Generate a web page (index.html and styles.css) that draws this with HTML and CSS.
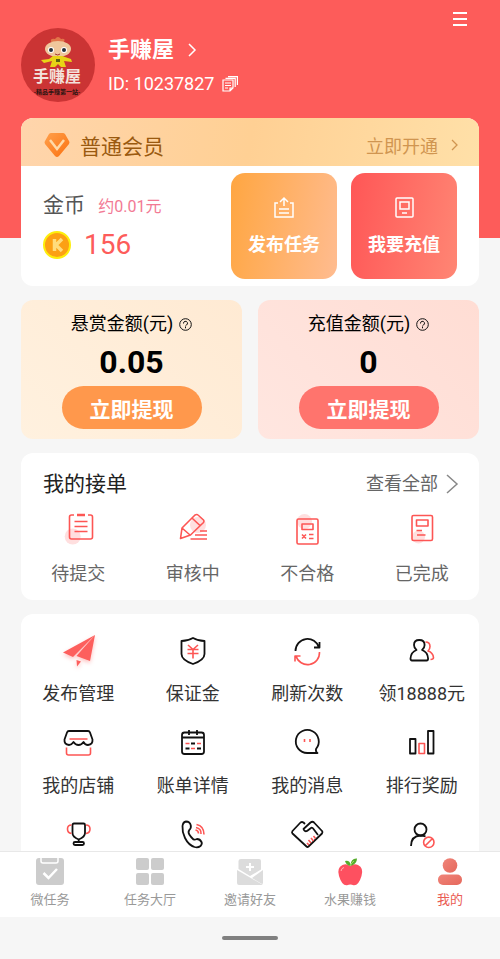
FILE: index.html
```html
<!DOCTYPE html>
<html lang="zh-CN">
<head>
    <meta charset="UTF-8">
    <meta name="viewport" content="width=device-width, initial-scale=1.0">
    <title>我的</title>
    <link rel="stylesheet" href="styles.css">
</head>
<body>
    <main class="page">
        <div class="topbar">
            <button class="menu-btn" type="button" aria-label="菜单">
                <svg width="16" height="16" viewBox="0 0 16 16"><path d="M1 2h14M1 8h14M1 14h14" stroke="#fff" stroke-width="2"/></svg>
            </button>
        </div>

        <header class="profile">
            <svg class="avatar" viewBox="0 0 74 74">
                <circle cx="37" cy="37" r="37" fill="#cb3434"/>
                <path d="M30 14q-1-4 4-3q3-4 6 0q5-1 3 3z" fill="#e2754a"/>
                <path d="M39 15l9 1-3 3z" fill="#7c9a1e"/>
                <ellipse cx="37" cy="21" rx="13" ry="8" fill="#f0c79c"/>
                <circle cx="30" cy="22" r="3" fill="#fff"/>
                <circle cx="43" cy="22" r="3" fill="#fff"/>
                <circle cx="30" cy="22" r="2" fill="#25303a"/>
                <circle cx="43" cy="22" r="2" fill="#25303a"/>
                <path d="M34 26q3 2 5 0" fill="none" stroke="#a3382c"/>
                <path d="M32 28h9l9 3 1 3-8-1 2 6h-5l-3-3-3 3h-5l2-6-8 2-3-3 8-1z" fill="#e8d416"/>
                <path d="M35 31h4v3h-4z" fill="#5c6411"/>
                <text class="avatar-name" x="36" y="54" text-anchor="middle">手赚屋</text>
                <text class="avatar-slogan" x="36" y="66" text-anchor="middle">-精品手赚第一站-</text>
            </svg>
            <div class="profile-info">
                <a class="profile-name" href="#">手赚屋
                    <svg width="10" height="14" viewBox="0 0 10 14"><path d="M2 1l6 6-6 6" fill="none" stroke="#fff" stroke-width="1.5"/></svg>
                </a>
                <div class="profile-id">ID: 10237827
                    <button class="copy-btn" type="button" aria-label="复制">
                        <svg width="16" height="16" viewBox="0 0 16 16" fill="none" stroke="#fff" stroke-width="1.2"><path d="M1 4h10v8l-3 3H1zM8 15v-3h3M3 7h6M3 9.500h6M3 12h3M3.500 2.300h9.700V11M6 .6h9.400V9"/></svg>
                    </button>
                </div>
            </div>
        </header>

        <section class="card vip">
            <div class="vip-head">
                <svg width="28" height="26" viewBox="0 0 28 26">
                    <defs><linearGradient id="gem" x2="1" y2="1"><stop stop-color="#ffa04c"/><stop offset="1" stop-color="#fb7110"/></linearGradient></defs>
                    <path d="M8 1h12q1 0 2 1l4 7q1 1 0 3L16 24q-2 2-4 0L2 12q-1-2 0-3l4-7q1-1 2-1z" fill="url(#gem)"/>
                    <path d="M7 8l7 9 7-9" fill="none" stroke="#ffd9a8" stroke-width="2.500"/>
                </svg>
                <span class="vip-level">普通会员</span>
                <a class="vip-open" href="#">立即开通
                    <svg width="8" height="12" viewBox="0 0 8 12"><path d="M1 1l5 5-5 5" fill="none" stroke="#d09550" stroke-width="1.300"/></svg>
                </a>
            </div>
            <div class="vip-body">
                <div class="coins">
                    <div class="coins-title">金币 <small>约0.01元</small></div>
                    <div class="coins-value">
                        <svg width="28" height="28" viewBox="0 0 28 28">
                            <circle cx="14" cy="14" r="13" fill="#fca014" stroke="#fdee0c" stroke-width="2"/>
                            <path d="M11.500 8v12M19 8l-6 6 6 6" fill="none" stroke="#ffdc7c" stroke-width="3.500"/>
                        </svg>
                        156
                    </div>
                </div>
                <button class="tile tile-orange" type="button">
                    <svg width="24" height="24" viewBox="0 0 24 24" fill="none" stroke="#fff" stroke-width="1.500"><path d="M6 7H3v14h18V7h-3M12 10V2M8 6l4-4 4 4M7 13h10M7 17h10"/></svg>
                    发布任务
                </button>
                <button class="tile tile-red" type="button">
                    <svg width="24" height="24" viewBox="0 0 24 24" fill="none" stroke="#fff" stroke-width="1.500"><rect x="4" y="2" width="17" height="19" rx="1"/><path d="M8 6h9v7H8zM10 17h5"/></svg>
                    我要充值
                </button>
            </div>
        </section>

        <section class="wallets">
            <div class="wallet wallet-orange">
                <div class="wallet-title">悬赏金额(元)
                    <svg width="13" height="13" viewBox="0 0 13 13" fill="none" stroke="#111"><circle cx="6.500" cy="6.500" r="5.800"/><path d="M4.500 5.500a2 2 0 1 1 3 1.500q-1 .5-1 1.500M6.500 9v1.300"/></svg>
                </div>
                <strong>0.05</strong>
                <button type="button">立即提现</button>
            </div>
            <div class="wallet wallet-red">
                <div class="wallet-title">充值金额(元)
                    <svg width="13" height="13" viewBox="0 0 13 13" fill="none" stroke="#111"><circle cx="6.500" cy="6.500" r="5.800"/><path d="M4.500 5.500a2 2 0 1 1 3 1.500q-1 .5-1 1.500M6.500 9v1.300"/></svg>
                </div>
                <strong>0</strong>
                <button type="button">立即提现</button>
            </div>
        </section>

        <section class="card orders">
            <div class="orders-head">
                <h2>我的接单</h2>
                <a href="#">查看全部
                    <svg width="13" height="20" viewBox="0 0 13 20"><path d="M1 1l10 9-10 9" fill="none" stroke="#888" stroke-width="1.500"/></svg>
                </a>
            </div>
            <nav class="grid">
                <a href="#">
                    <svg class="icon red" viewBox="0 0 32 32">
                        <circle class="blush" cx="10.700" cy="24.500" r="8"/>
                        <path d="M12 3H9.500q-2 0-2 2v20q0 2 2 2h19q2 0 2-2V5q0-2-2-2H26M12.500 9.500h13M12.500 14.500h13M12.500 19.500h13"/>
                        <path d="M15 3h8" stroke-width="2.500"/>
                    </svg>
                    待提交
                </a>
                <a href="#">
                    <svg class="icon red" viewBox="0 0 32 32">
                        <circle class="blush" cx="21" cy="13" r="8"/>
                        <path d="M3.500 26.500L5 16 18 3q2-1 3 0l5.500 5q1 1 0 2.500L13.500 23zM5 16l8 7M15.500 6.500l8 7.500M23 19h7M18 23h12M13.500 27H30"/>
                    </svg>
                    审核中
                </a>
                <a href="#">
                    <svg class="icon red" viewBox="0 0 32 32">
                        <circle class="blush" cx="13.500" cy="9.500" r="7.500"/>
                        <rect x="6" y="7" width="21" height="25" rx="1.500"/>
                        <path d="M11 12h11v5.500H11zM11 22.500l4 4M15 22.500l-4 4M18 22.500h4.500M18 26.500h4.500"/>
                    </svg>
                    不合格
                </a>
                <a href="#">
                    <svg class="icon red" viewBox="0 0 32 32">
                        <circle class="blush" cx="12.500" cy="25" r="6.500"/>
                        <rect x="6" y="3.500" width="20.500" height="25" rx="1.500"/>
                        <path d="M10.500 8h11.500v6H10.500zM10.500 18.500H16M11 23h8.500"/>
                    </svg>
                    已完成
                </a>
            </nav>
        </section>

        <nav class="card grid tools">
            <a href="#">
                <svg class="icon plane" viewBox="0 0 32 32">
                    <path d="M33 1L1 18.500l10 4.500zM33 1l-5 26-13.500-5zM14.500 26l4.500 1.500-4 5z"/>
                </svg>
                发布管理
            </a>
            <a href="#">
                <svg class="icon" viewBox="0 0 32 32">
                    <path d="M16 4q5 3 11.500 3v13q0 6-11.500 10Q4.500 26 4.500 20V7Q11 7 16 4z"/>
                    <path class="red" d="M11 11l5 4.500 5-4.500M10.500 15.500h11M10.500 19.500h11M16 15.500v9"/>
                </svg>
                保证金
            </a>
            <a href="#">
                <svg class="icon" viewBox="0 0 32 32">
                    <path d="M4.500 17A12 12 0 0 1 28 13.500M28.500 8v5.500H23"/>
                    <path class="red" d="M28.500 18A12 12 0 0 1 5 22M4 27.500V22h5.500"/>
                </svg>
                刷新次数
            </a>
            <a href="#">
                <svg class="icon" viewBox="0 0 32 32">
                    <path d="M10.500 16Q8 14 8 11q0-5 5.300-5t5.300 5q0 3-2.500 5 5.500 2 6 8.500 0 2-1.500 2H6q-1.500 0-1.500-2 .5-6.500 6-8.500z"/>
                    <path class="red" d="M19.500 8q4.500 0 4.500 4.500 0 2.500-2 4.500 5 1.500 5.500 6.500 0 2-3 2"/>
                </svg>
                领18888元
            </a>
            <a href="#">
                <svg class="icon" viewBox="0 0 32 32">
                    <path d="M7 5h19q1.500 0 2 1.500l2.500 7q.5 5-4.500 5.500-3 0-4.500-3-2 3-5 3t-5-3q-2 3-4.500 3-5-.5-4.500-5.500L5 6.500Q5.500 5 7 5z"/>
                    <path class="red" d="M7.500 13h18M4.500 21.500V27q0 2 2 2h20q2 0 2-2v-5.500"/>
                </svg>
                我的店铺
            </a>
            <a href="#">
                <svg class="icon" viewBox="0 0 32 32">
                    <rect x="5" y="6.500" width="22" height="21.500" rx="2.500"/>
                    <path d="M5 11.500h22M12 4v5M20 4v5M14 17.500h4M8.500 22.500h4M20 22.500h4"/>
                    <path class="red" d="M8.500 17.500h4M20 17.500h4M14 22.500h4"/>
                </svg>
                账单详情
            </a>
            <a href="#">
                <svg class="icon" viewBox="0 0 32 32">
                    <path d="M26.500 27H16.300A11.500 11.500 0 1 1 25 23q-.5 3 1.500 4z"/>
                    <path class="red" d="M13.500 13v3M19 13v3"/>
                </svg>
                我的消息
            </a>
            <a href="#">
                <svg class="icon" viewBox="0 0 32 32">
                    <path d="M4 13h5.500v14.500H4zM22 5h5.500v22.500H22z"/>
                    <path class="red" d="M13 17.500h5.500v10H13z"/>
                </svg>
                排行奖励
            </a>
            <a href="#" aria-label="排行榜">
                <svg class="icon" viewBox="0 0 32 32">
                    <path d="M12 5.500h9.500q1.500 0 1.500 1.500v8q0 4-6.300 6.500Q10.500 19 10.500 15V7q0-1.500 1.500-1.500zM16.700 21.500v2.500"/>
                    <rect x="11.500" y="24" width="10.500" height="3" rx="1.500"/>
                    <path class="red" d="M9.500 7Q5.500 7 5.500 11t4 4.500M24 7q4 0 4 4t-4 4.500"/>
                </svg>
            </a>
            <a href="#" aria-label="联系客服">
                <svg class="icon" viewBox="0 0 32 32">
                    <path d="M9 3.500q4 0 4.800 4 .5 3-1.500 4.500-1.500 2 0 4.500t4.200 5q1.500.5 3.500-.5 3 0 4.500 3 1 2-1 4-2.500 2-6 1-6-2-9.500-9Q5 14 5.500 8 6 4 9 3.500z"/>
                    <path class="red" d="M18.500 12q3 .5 3 3.500M19 9.500q5.500 1 5 6.500M19.500 6.500q7.500 1.500 7.500 10"/>
                </svg>
            </a>
            <a href="#" aria-label="商务合作">
                <svg class="icon" viewBox="0 0 32 32">
                    <path d="M14 6l-1.500-1.500q-1.500-1-3 0L1.500 13q-1 1.500 0 2.500l14 13q1 1 2 0l13.500-13q1-1.500 0-2.500l-8-8.500q-1.500-1.500-3.500 0l-7 6.500q1 3 3.500 2l4-3q1-1 2.500 1l4.500 6"/>
                    <path class="red" d="M16 25l2 2M17.500 22l2.500 3M20 20l2.500 3M22.500 18l2 2.500"/>
                </svg>
            </a>
            <a href="#" aria-label="黑名单">
                <svg class="icon" viewBox="0 0 32 32">
                    <circle cx="14.500" cy="11.500" r="6"/>
                    <path d="M5 28q0-10 9.500-10.500 3 0 5 1"/>
                    <path class="red" d="M19 28l7.500-7.500M28 24.300a5.200 5.200 0 1 1-10.400 0 5.200 5.200 0 0 1 10.400 0z"/>
                </svg>
            </a>
        </nav>
    </main>

    <nav class="tabbar">
        <a href="#">
            <svg viewBox="0 0 28 28">
                <rect width="28" height="27" rx="3" fill="#ccc"/>
                <path d="M5 0v3q0 2 2 2h13q2 0 2-2V0" fill="none" stroke="#fff" stroke-width="1.500"/>
                <path d="M7.500 15l5 5 8.500-9" fill="none" stroke="#fff" stroke-width="2.500"/>
            </svg>
            微任务
        </a>
        <a href="#">
            <svg viewBox="0 0 28 28" fill="#ccc">
                <rect width="13" height="12" rx="2"/><rect x="15" width="13" height="12" rx="2"/>
                <rect y="15" width="13" height="12" rx="2"/><rect x="15" y="15" width="13" height="12" rx="2"/>
            </svg>
            任务大厅
        </a>
        <a href="#">
            <svg viewBox="0 0 28 28" fill="#dcdcdc">
                <path d="M5 1h18q2 0 2 2v8.500L14 18 2.500 11V3Q2.500 1 5 1z"/>
                <path d="M1 12l26 15H3q-2 0-2-2zM27 12v13q0 1-1 1l-10-6z"/>
                <path d="M14 5v8M10 9h8" stroke="#fff" stroke-width="2"/>
            </svg>
            邀请好友
        </a>
        <a href="#">
            <svg viewBox="0 0 28 28">
                <path d="M14 8q4-3 8-1 6 3 3.500 11-3 10-8 9.300-3-1.500-6.500 0-5 .7-8-9.300Q.5 10 6.500 7q4-2 7.500 1z" fill="#fe5060"/>
                <path d="M5 13q.5-3 3-3.500" fill="none" stroke="#ffb3b3"/>
                <path d="M14 8Q10 7 9 3q5-1 5.500 4Q15 0 21 .5q0 6-7 7.500z" fill="#55ac2a"/>
                <path d="M14 8q2-4 4-5" fill="none" stroke="#a6dc6a"/>
            </svg>
            水果赚钱
        </a>
        <a class="active" href="#">
            <svg viewBox="0 0 28 28">
                <defs><linearGradient id="me" x2="1" y2="1"><stop stop-color="#f0857a"/><stop offset="1" stop-color="#e5685c"/></linearGradient></defs>
                <circle cx="14" cy="7.500" r="7.300" fill="url(#me)"/>
                <rect x="2" y="16.500" width="24" height="10.500" rx="5" fill="url(#me)"/>
            </svg>
            我的
        </a>
    </nav>
    <div class="gesture"></div>
</body>
</html>
```
FILE: styles.css
```css
* {
    box-sizing: border-box;
}
body {
    margin: 0;
    height: 100vh;
    display: flex;
    flex-direction: column;
    font-family: Roboto, "Noto Sans CJK SC", sans-serif;
    font-size: 18px;
    color: #333;
    background-color: #f6f6f6;
}
a {
    color: inherit;
    text-decoration: none;
}
button {
    font: inherit;
    border: none;
    padding: 0;
    cursor: pointer;
}
svg {
    flex: none;
    overflow: visible;
}
.page {
    flex: 1;
    min-height: 0;
    overflow: hidden;
    padding: 0 21px;
    background: linear-gradient(#fd5c5a, #fd5c5a) no-repeat top / 100% 238px;
}
.card {
    background-color: #fff;
    border-radius: 12px;
    margin-bottom: 14px;
}

/* header */
.topbar {
    display: flex;
    justify-content: flex-end;
    height: 28px;
    padding: 11px 11px 0 0;
}
.menu-btn, .copy-btn {
    display: flex;
    width: 16px;
    height: 16px;
    background: none;
}
.profile {
    display: flex;
    gap: 13px;
    margin-bottom: 16px;
    color: #fff;
}
.avatar {
    width: 74px;
    height: 74px;
}
.avatar-name {
    font: 700 16px "Noto Sans CJK SC", sans-serif;
    fill: #f3e3dc;
}
.avatar-slogan {
    font: 700 6px "Noto Sans CJK SC", sans-serif;
    fill: #2b1512;
}
.profile-info {
    display: flex;
    flex-direction: column;
    gap: 6px;
    padding-top: 8px;
}
.profile-name {
    display: flex;
    align-items: center;
    gap: 13px;
    font-size: 22px;
    font-weight: 700;
    line-height: 28px;
}
.profile-id {
    display: flex;
    align-items: center;
    gap: 8px;
    line-height: 28px;
}

/* membership and coins */
.vip {
    overflow: hidden;
}
.vip-head {
    display: flex;
    align-items: center;
    gap: 9px;
    height: 48px;
    padding: 6px 20px 0 22px;
    background: linear-gradient(100deg, #ffd5ac, #ffd094 50%, #ffe0a8);
}
.vip-level {
    flex: 1;
    font-size: 21px;
    color: #9a5a10;
}
.vip-open {
    display: flex;
    align-items: center;
    gap: 13px;
    color: #d09550;
}
.vip-body {
    display: flex;
    gap: 14px;
    padding: 7px 22px;
}
.coins {
    flex: 1;
    display: flex;
    flex-direction: column;
    gap: 6px;
    padding-top: 16px;
}
.coins-title {
    font-size: 21px;
    line-height: 32px;
    color: #555;
}
.coins-title small {
    margin-left: 8px;
    font-size: 16px;
    color: #f27a94;
}
.coins-value {
    display: flex;
    align-items: center;
    gap: 13px;
    font-size: 28px;
    line-height: 32px;
    color: #fd5c5a;
}
.tile {
    display: flex;
    flex-direction: column;
    align-items: center;
    justify-content: center;
    gap: 10px;
    width: 106px;
    height: 106px;
    border-radius: 14px;
    color: #fff;
    font-weight: 700;
}
.tile-orange {
    background: linear-gradient(100deg, #ffa641, #ffbc90);
}
.tile-red {
    background: linear-gradient(100deg, #ff5656, #ff8674);
}

/* balances */
.wallets {
    display: grid;
    grid-template-columns: 1fr 1fr;
    gap: 16px;
    margin-bottom: 14px;
}
.wallet {
    display: flex;
    flex-direction: column;
    align-items: center;
    padding: 10px 0;
    border-radius: 12px;
    color: #000;
}
.wallet-orange {
    background: linear-gradient(45deg, #fff1df, #ffead3);
}
.wallet-red {
    background: linear-gradient(45deg, #ffe6e0, #ffddd4);
}
.wallet-title {
    display: flex;
    align-items: center;
    gap: 6px;
    line-height: 28px;
}
.wallet strong {
    font-size: 32px;
    line-height: 48px;
}
.wallet button {
    width: 140px;
    height: 43px;
    border-radius: 22px;
    font-size: 21px;
    font-weight: 700;
    color: #fff;
}
.wallet-orange button {
    background-color: #ff984c;
}
.wallet-red button {
    background-color: #ff746d;
}

/* icon grids */
.orders {
    padding: 16px 0 14px;
}
.orders-head {
    display: flex;
    justify-content: space-between;
    align-items: center;
    padding: 0 20px 0 22px;
    margin-bottom: 13px;
    line-height: 30px;
}
.orders-head h2 {
    margin: 0;
    font-size: 21px;
    font-weight: 400;
    color: #222;
}
.orders-head a {
    display: flex;
    align-items: center;
    gap: 8px;
}
.orders a {
    color: #666;
}
.grid {
    display: grid;
    grid-template-columns: repeat(4, 1fr);
    row-gap: 20px;
}
.grid a {
    display: flex;
    flex-direction: column;
    align-items: center;
    gap: 16px;
    line-height: 24px;
}
.orders .grid a {
    gap: 18px;
}
.tools {
    padding: 20px 0;
}
.icon {
    width: 32px;
    height: 32px;
    fill: none;
    stroke: #111;
    stroke-width: 1.8;
    stroke-linejoin: round;
}
.red {
    stroke: #fd5654;
    stroke-width: 1.6;
}
.blush {
    fill: #ffdfdf;
    stroke: none;
}
.plane {
    fill: #fd5f5d;
    stroke: none;
    filter: drop-shadow(0 2px 2px #fd5f5d66);
}

/* bottom bars */
.tabbar {
    display: grid;
    grid-template-columns: repeat(5, 1fr);
    height: 66px;
    padding-top: 6px;
    border-top: 1px solid #e8e8e8;
    background-color: #fff;
    font-size: 13px;
    color: #999;
}
.tabbar a {
    display: flex;
    flex-direction: column;
    align-items: center;
    gap: 5px;
    line-height: 18px;
}
.tabbar svg {
    width: 28px;
    height: 28px;
}
.tabbar .active {
    color: #ea5c52;
}
.gesture {
    display: flex;
    justify-content: center;
    align-items: center;
    height: 42px;
}
.gesture::before {
    content: "";
    width: 56px;
    height: 4px;
    border-radius: 2px;
    background-color: #808080;
}
```
